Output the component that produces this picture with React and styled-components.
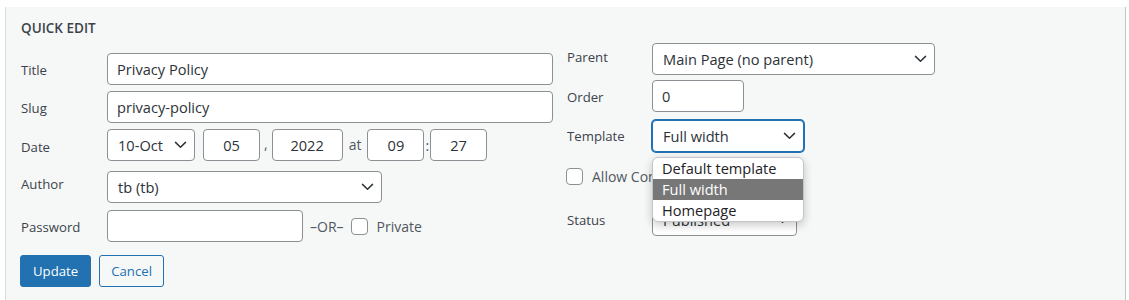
import React from "react";
import styled, { createGlobalStyle } from "styled-components";

const GlobalStyle = createGlobalStyle`
  html, body {
    margin: 0;
    padding: 0;
    background: #fff;
  }
  body {
    font-family: "Open Sans", "Noto Sans", sans-serif;
    font-size: 14px;
    color: #2c3338;
  }
`;

const Panel = styled.div`
  margin: 7px 3px 0 5px;
  height: 293px;
  box-sizing: border-box;
  background: #f6f7f7;
  border-left: 1px solid #dcdcde;
  border-right: 1px solid #c3c4c7;
  padding: 11px 14px 0;
  display: grid;
  grid-template-columns: 533px 1fr;
  column-gap: 13px;
`;

const Column = styled.div`
  display: flex;
  flex-direction: column;
  padding-top: ${(p) => p.$top || 0}px;
`;

const Legend = styled.div`
  font-size: 13.5px;
  font-weight: 600;
  line-height: 20px;
  color: #3c434a;
  text-transform: uppercase;
  margin: 0 0 15px 1px;
`;

const Row = styled.div`
  display: flex;
  align-items: center;
  height: 32px;
  margin-top: ${(p) => p.$mt || 0}px;
`;

const Label = styled.span`
  width: ${(p) => p.$w || 87}px;
  flex-shrink: 0;
  color: #3c434a;
  font-size: 13.2px;
  padding-left: 1px;
  box-sizing: border-box;
  position: relative;
  top: ${(p) => p.$dy || 0}px;
`;

const Input = styled.div`
  box-sizing: border-box;
  width: ${(p) => p.$w}px;
  height: 32px;
  background: #fff;
  border: 1px solid #8c8f94;
  border-radius: 4px;
  padding: 0 9px;
  display: flex;
  align-items: center;
  justify-content: ${(p) => (p.$center ? "center" : "flex-start")};
  color: #2c3338;
  font-size: 14.6px;
  white-space: nowrap;
`;

const SelectBox = styled(Input)`
  justify-content: space-between;
  padding: 0 7px 0 10px;
  ${(p) =>
    p.$focus &&
    `
    border-color: #2271b1;
    box-shadow: 0 0 0 1px #2271b1;
  `}
`;

const Sep = styled.span`
  color: #50575e;
  font-size: 14px;
  margin: 0 ${(p) => p.$m || 3}px;
  position: relative;
  top: ${(p) => p.$dy || 0}px;
`;

const Check = styled.span`
  box-sizing: border-box;
  display: inline-block;
  width: 17px;
  height: 17px;
  background: #fff;
  border: 1px solid #8c8f94;
  border-radius: 4px;
  flex-shrink: 0;
`;

const CheckText = styled.span`
  color: #50575e;
  font-size: 14px;
  margin-left: 9px;
`;

const Buttons = styled.div`
  display: flex;
  gap: 8px;
  margin-top: 13px;
`;

const Button = styled.div`
  box-sizing: border-box;
  height: 32px;
  padding: 0 ${(p) => (p.$primary ? 12 : 11)}px;
  display: flex;
  align-items: center;
  border-radius: 3px;
  border: 1px solid #2271b1;
  background: ${(p) => (p.$primary ? "#2271b1" : "#f6f7f7")};
  color: ${(p) => (p.$primary ? "#fff" : "#2271b1")};
  font-size: 13.2px;
`;

const SelectWrap = styled.div`
  position: relative;
`;

const Popup = styled.div`
  position: absolute;
  left: 0;
  top: 37px;
  width: 152px;
  box-sizing: border-box;
  background: #fff;
  border: 1px solid #c3c4c7;
  border-radius: 6px;
  box-shadow: 0 3px 10px rgba(0, 0, 0, 0.22);
  overflow: hidden;
  z-index: 2;
`;

const Option = styled.div`
  height: 21px;
  line-height: 21px;
  padding-left: 9px;
  font-size: 14.6px;
  color: ${(p) => (p.$active ? "#fff" : "#1d2327")};
  background: ${(p) => (p.$active ? "#777777" : "transparent")};
`;

const Chevron = () => (
  <svg width="13" height="8" viewBox="0 0 13 8" fill="none">
    <polyline
      points="1.5,1.4 6.5,6.2 11.5,1.4"
      stroke="#2c3338"
      strokeWidth="1.5"
      strokeLinecap="round"
      strokeLinejoin="round"
    />
  </svg>
);

const Select = ({ w, value, focus }) => (
  <SelectBox $w={w} $focus={focus}>
    <span>{value}</span>
    <Chevron />
  </SelectBox>
);

export default function App() {
  return (
    <>
      <GlobalStyle />
      <Panel>
        <Column>
          <Legend>Quick Edit</Legend>
          <Row>
            <Label $dy={1}>Title</Label>
            <Input $w={446}>Privacy Policy</Input>
          </Row>
          <Row $mt={6}>
            <Label $dy={1}>Slug</Label>
            <Input $w={446}>privacy-policy</Input>
          </Row>
          <Row $mt={6}>
            <Label $dy={2}>Date</Label>
            <Select w={88} value="10-Oct" />
            <Input $w={57} $center style={{ marginLeft: 8 }}>
              05
            </Input>
            <Sep $m={4} $dy={-2}>,</Sep>
            <Input $w={71} $center>
              2022
            </Input>
            <Sep $m={6} $dy={-1}>at</Sep>
            <Input $w={57} $center>
              09
            </Input>
            <Sep $m={1}>:</Sep>
            <Input $w={57} $center>
              27
            </Input>
          </Row>
          <Row $mt={10}>
            <Label $dy={-3}>Author</Label>
            <Select w={275} value="tb (tb)" />
          </Row>
          <Row $mt={7}>
            <Label $dy={1}>Password</Label>
            <Input $w={196} />
            <Sep $m={7}>–OR–</Sep>
            <Check />
            <CheckText>Private</CheckText>
          </Row>
          <Buttons>
            <Button $primary>Update</Button>
            <Button>Cancel</Button>
          </Buttons>
        </Column>
        <Column $top={25}>
          <Row>
            <Label $w={86} $dy={-2}>Parent</Label>
            <Select w={283} value="Main Page (no parent)" />
          </Row>
          <Row $mt={5}>
            <Label $w={86} $dy={1}>Order</Label>
            <Input $w={92}>0</Input>
          </Row>
          <Row $mt={8}>
            <Label $w={86}>Template</Label>
            <SelectWrap>
              <Select w={152} value="Full width" focus />
              <Popup>
                <Option>Default template</Option>
                <Option $active>Full width</Option>
                <Option>Homepage</Option>
              </Popup>
            </SelectWrap>
          </Row>
          <Row $mt={8}>
            <Check />
            <CheckText>Allow Comments</CheckText>
          </Row>
          <Row $mt={12}>
            <Label $w={86}>Status</Label>
            <Select w={145} value="Published" />
          </Row>
        </Column>
      </Panel>
    </>
  );
}
